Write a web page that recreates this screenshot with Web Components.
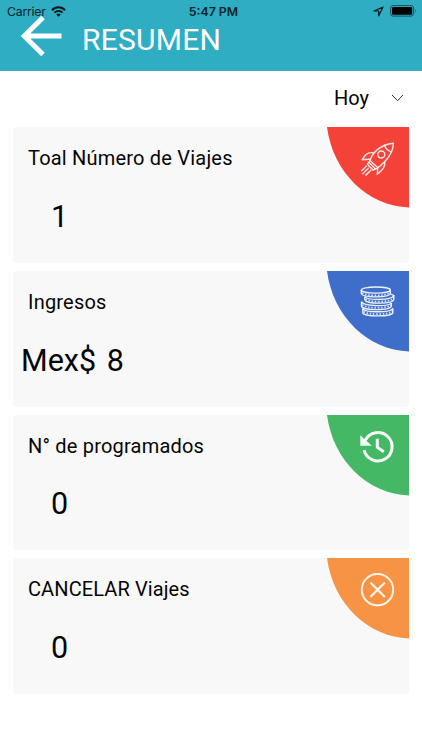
<!DOCTYPE html>
<html lang="es">
<head>
<meta charset="utf-8">
<meta name="viewport" content="width=device-width, initial-scale=1">
<title>Resumen</title>
<style>
  body {
    margin: 0;
    background: #fff;
    color: #050505;
    font-family: Roboto, "Liberation Sans", sans-serif;
  }
</style>
</head>
<body>
<summary-screen></summary-screen>

<script>
const icons = {
  rocket: `
    <g fill="none" stroke="#fff" stroke-opacity=".88" stroke-width="1.4" stroke-linejoin="round" stroke-linecap="round">
      <path d="M9 21 C11 12 19 3 33 1.500 C33 12 26 20 15.500 27.500 Z"/>
      <path d="M24 3.500 C25.500 7 28 9.200 31 10.200"/>
      <circle cx="21" cy="12.800" r="3.500"/>
      <path d="M12.500 11 C7 10.500 5 13 2 18 L9 17.500"/>
      <path d="M24.500 20.500 C25 26 21 29 17 32.500 L17.500 26"/>
      <path d="M8.500 20.500 L7 22.500 L13 28.500 L15.500 27 M10 19 L17 25.500"/>
      <path d="M6 24.500 L1.500 29 M8 26.500 L2.500 32 M10.500 28.500 L5.500 33.500"/>
    </g>`,
  coins: `
    <g transform="translate(0 .2) scale(1 .92)">
      <g fill="none" stroke="#fff" stroke-opacity=".9" stroke-width="1.400">
        <path d="M2.500 24.500 V29 C3 33.800 32 33.800 32.500 29 V24.500"/>
        <path d="M2.500 24.500 C4 29.300 31 29.300 32.500 24.500"/>
        <path d="M1.200 17.300 V22 C2 27 30 27 31 22 V18.500"/>
        <path d="M1.200 17.300 C3 22.500 29 22.500 31 18.500"/>
        <path d="M4.500 11.800 V15 C6 20 32.500 20 33.500 15 V10.500"/>
        <path d="M4.500 11.800 C7 15.800 32 15.800 33.500 10.500 L30 8.500"/>
        <ellipse cx="15.500" cy="4.500" rx="14.500" ry="3.300"/>
        <path d="M1 4.500 V8.500 C2 13 29 13 30 8.500 V4.500"/>
      </g>
      <g fill="none" stroke="#fff" stroke-opacity=".8" stroke-width="1.800" stroke-dasharray="1.500 1.700">
        <path d="M2 7.700 C6 11.200 25 11.200 29.500 7.700"/>
        <path d="M5.500 14.300 C9 18 29 18 33 14"/>
        <path d="M2 20.700 C6 24.700 27 24.700 30.500 21"/>
        <path d="M3.500 28 C8 31.500 28 31.500 32 28"/>
      </g>
    </g>`,
  history: `
    <g fill="none" stroke="#fff" stroke-opacity=".94" stroke-width="3">
      <path d="M5 10.500 A14.200 14.200 0 1 1 3.800 20.500"/>
      <path d="M17 9 V17.500 L23.500 22"/>
    </g>
    <path d="M0 5.500 V16 H11.500 Z" fill="#fff" fill-opacity=".94"/>`,
  cancel: `
    <g fill="none" stroke="#fff" stroke-opacity=".9" stroke-width="2" stroke-linecap="round">
      <circle cx="17.200" cy="17" r="15.700"/>
      <path d="M10.800 10.500 L23.800 23.500 M23.800 10.500 L10.800 23.500" stroke-width="2.300"/>
    </g>`
};

class StatusBar extends HTMLElement {
  constructor() {
    super();
    this.attachShadow({ mode: 'open' });
  }

  connectedCallback() {
    this.shadowRoot.innerHTML = `
      <style>
        :host {
          display: grid;
          grid-template-columns: 1fr auto 1fr;
          align-items: center;
          height: 22px;
          padding: 0 5px 0 7px;
          color: #06262c;
          font: 12.300px Inter, "Liberation Sans", sans-serif;
        }
        div {
          display: flex;
          align-items: center;
        }
        .carrier { gap: 5px; letter-spacing: -0.25px; }
        .time {
          padding-left: 3px;
          font-weight: 600;
          letter-spacing: 0;
        }
        .power { justify-content: flex-end; gap: 6px; }
        svg { display: block; }
      </style>
      <div class="carrier">
        <span>Carrier</span>
        <svg width="15" height="11" viewBox="0 0 15 11">
          <g fill="none" stroke="#06181c" stroke-width="2">
            <path d="M1 4.200 C4.500 .4 10.500 .4 14 4.200"/>
            <path d="M3.500 6.600 C5.800 4.300 9.200 4.300 11.500 6.600"/>
          </g>
          <path d="M5.300 8.400 Q7.500 6.700 9.700 8.400 L7.500 10.700 Z" fill="#06181c"/>
        </svg>
      </div>
      <span class="time">5:47 PM</span>
      <div class="power">
        <svg width="11" height="11" viewBox="0 0 11 11">
          <path d="M10 1 L1 5 H5.700 V9.800 Z" fill="none" stroke="#06181c" stroke-width="1.200" stroke-linejoin="round"/>
        </svg>
        <svg width="27" height="12" viewBox="0 0 27 12">
          <rect x=".6" y=".6" width="23" height="10.500" rx="2.500" fill="none" stroke="#14505c"/>
          <rect x="2" y="2" width="20.200" height="7.700" rx="1.200"/>
          <path d="M25 4 Q26.500 5.800 25 7.700 Z" fill="#14505c"/>
        </svg>
      </div>
    `;
  }
}

class TitleBar extends HTMLElement {
  constructor() {
    super();
    this.attachShadow({ mode: 'open' });
  }

  connectedCallback() {
    this.shadowRoot.innerHTML = `
      <style>
        :host {
          display: block;
          height: 71px;
          background: #2fadc3;
          color: #fff;
        }
        .row {
          display: flex;
          align-items: flex-start;
          gap: 19px;
          margin-top: -6px;
          padding-left: 21px;
        }
        svg { flex: none; }
        h1 {
          margin: 6px 0 0;
          font-size: 30px;
          font-weight: 400;
          line-height: 36px;
          letter-spacing: 0.25px;
        }
      </style>
      <status-bar></status-bar>
      <div class="row">
        <svg width="42" height="42" viewBox="0 0 42 42">
          <path d="M22 1.500 L3.300 20 L22 38.500 M3 20 H40.500" fill="none" stroke="#fff" stroke-width="5"/>
        </svg>
        <h1><slot></slot></h1>
      </div>
    `;
  }
}

class PeriodPicker extends HTMLElement {
  constructor() {
    super();
    this.attachShadow({ mode: 'open' });
  }

  connectedCallback() {
    this.shadowRoot.innerHTML = `
      <style>
        :host {
          display: flex;
          justify-content: flex-end;
          align-items: center;
          gap: 22px;
          height: 54px;
          padding-right: 18px;
          box-sizing: border-box;
          font-size: 20px;
        }
      </style>
      <slot></slot>
      <svg width="13" height="8" viewBox="0 0 13 8">
        <path d="M1 1 L6.500 6.700 L12 1" fill="none" stroke="#333" stroke-width="1"/>
      </svg>
    `;
  }
}

class SummaryCard extends HTMLElement {
  constructor() {
    super();
    this.attachShadow({ mode: 'open' });
  }

  connectedCallback() {
    this.shadowRoot.innerHTML = `
      <style>
        :host {
          display: flex;
          justify-content: space-between;
          height: 135.500px;
          border-radius: 4px 0 4px 4px;
          background: #f8f8f8;
        }
        h2 {
          margin: 19px 0 0 15.500px;
          font-size: 20px;
          font-weight: 400;
          line-height: 24px;
          letter-spacing: var(--label-spacing, 0.2px);
          white-space: nowrap;
        }
        .value {
          margin: 27.500px 0 0 var(--value-indent, 38.500px);
          font-size: 30.500px;
          line-height: 38px;
          white-space: pre;
          word-spacing: 3px;
        }
        .corner { flex: none; display: block; }
      </style>
      <div>
        <h2>${this.getAttribute('label')}</h2>
        <div class="value"><slot></slot></div>
      </div>
      <svg class="corner" width="82" height="81" viewBox="0 0 82 81">
        <path d="M0 0 H82 V80.500 C41 79 6 46 0 0 Z" fill="${this.getAttribute('color')}"/>
        <g transform="translate(33.300 14.700)">${icons[this.getAttribute('icon')]}</g>
      </svg>
    `;
  }
}

class SummaryScreen extends HTMLElement {
  constructor() {
    super();
    this.attachShadow({ mode: 'open' });
  }

  connectedCallback() {
    this.shadowRoot.innerHTML = `
      <style>
        :host {
          display: block;
          min-height: 750px;
        }
        main {
          display: grid;
          gap: 8.170px;
          margin: 2.400px 12.600px 0 12.500px;
        }
        .money {
          --value-indent: 8.500px;
        }
        .cancelled {
          --label-spacing: 0.1px;
        }
      </style>
      <title-bar>RESUMEN</title-bar>
      <period-picker>Hoy</period-picker>
      <main>
        <summary-card label="Toal Número de Viajes" icon="rocket" color="#f54238">1</summary-card>
        <summary-card class="money" label="Ingresos" icon="coins" color="#3f6dca">Mex$ 8</summary-card>
        <summary-card label="N° de programados" icon="history" color="#45b865">0</summary-card>
        <summary-card class="cancelled" label="CANCELAR Viajes" icon="cancel" color="#f69344">0</summary-card>
      </main>
    `;
  }
}

customElements.define('status-bar', StatusBar);
customElements.define('title-bar', TitleBar);
customElements.define('period-picker', PeriodPicker);
customElements.define('summary-card', SummaryCard);
customElements.define('summary-screen', SummaryScreen);
</script>
</body>
</html>
